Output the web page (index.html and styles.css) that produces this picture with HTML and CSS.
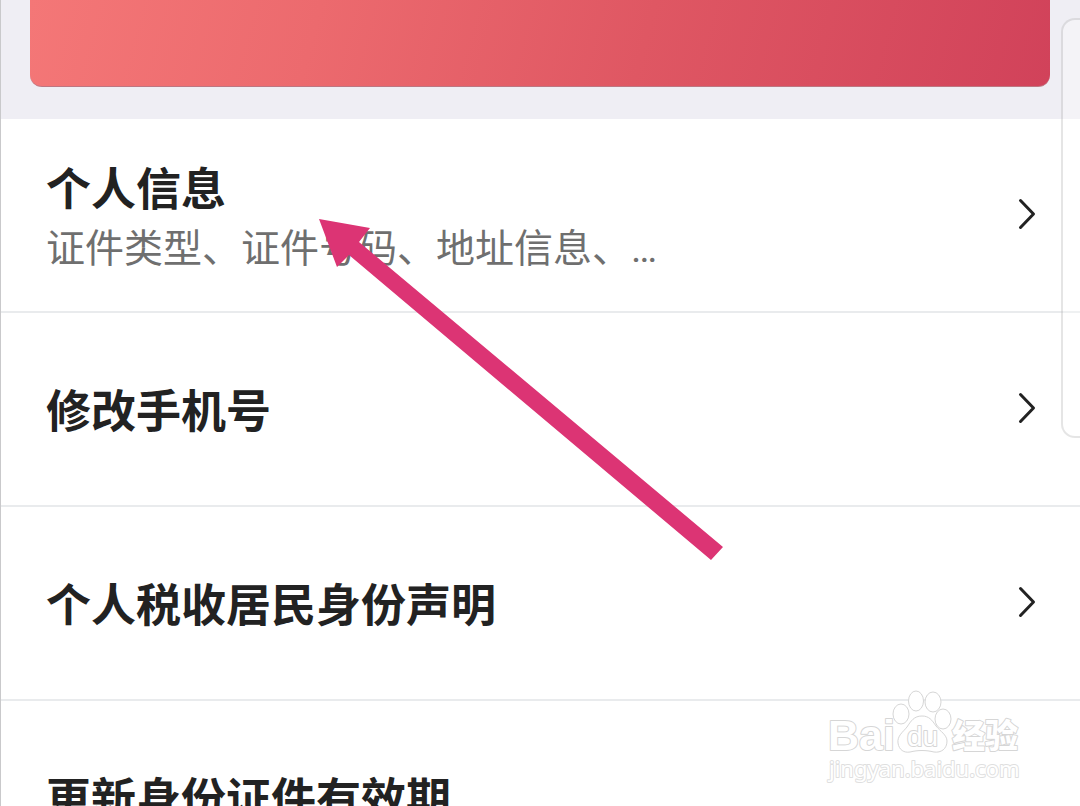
FILE: index.html
```html
<!DOCTYPE html>
<html lang="zh-CN">
<head>
<meta charset="utf-8">
<meta name="viewport" content="width=device-width, initial-scale=1">
<title>个人信息</title>
<link rel="stylesheet" href="styles.css">
</head>
<body>
<main class="screen">
  <header class="hero"><div class="card"></div></header>
  <nav class="list">
    <a class="row" href="#info">
      <span class="text"><span class="title">个人信息</span><span class="sub">证件类型、证件号码、地址信息、…</span></span>
      <svg class="chevron" viewBox="0 0 18 32" aria-hidden="true"><path d="M2.5 2.5 15.500 16 2.500 29.500"/></svg>
    </a>
    <a class="row" href="#phone">
      <span class="text"><span class="title">修改手机号</span></span>
      <svg class="chevron" viewBox="0 0 18 32" aria-hidden="true"><path d="M2.5 2.5 15.500 16 2.500 29.500"/></svg>
    </a>
    <a class="row" href="#tax">
      <span class="text"><span class="title">个人税收居民身份声明</span></span>
      <svg class="chevron" viewBox="0 0 18 32" aria-hidden="true"><path d="M2.5 2.5 15.500 16 2.500 29.500"/></svg>
    </a>
    <a class="row" href="#validity">
      <span class="text"><span class="title">更新身份证件有效期</span></span>
    </a>
  </nav>
  <div class="side-panel"></div>
  <svg class="arrow" viewBox="0 0 404 341" aria-hidden="true"><path d="M0 0 51 9 40 23 404 328 392 341 30 36 18 48Z"/></svg>
  <svg class="watermark" viewBox="0 0 200 100" role="img" aria-label="Baidu 经验 jingyan.baidu.com">
    <text class="wm-brand" x="0" y="60">Bai</text>
    <g class="wm-paw">
      <ellipse cx="73" cy="24" rx="8" ry="10"/>
      <ellipse cx="88" cy="11" rx="7.500" ry="10"/>
      <ellipse cx="105" cy="12" rx="8" ry="10"/>
      <ellipse cx="115" cy="29" rx="8" ry="10"/>
      <path d="M94 26C86 26 83 31 79 37C75 42 69 46 70 53C71 60 76 63 82 62C90 60 98 60 106 62C113 63 119 59 119 51C119 45 112 41 108 36C104 30 101 26 94 26Z"/>
    </g>
    <text class="wm-du" x="79" y="56">du</text>
    <text class="wm-cn" x="124" y="58">经验</text>
    <text class="wm-url" x="1" y="87">jingyan.baidu.com</text>
  </svg>
</main>
</body>
</html>
```
FILE: styles.css
```css
* { box-sizing: border-box; }
body { margin: 0; background: #fff; font-family: Roboto, "Noto Sans CJK SC", sans-serif; }
.screen { position: relative; height: 100vh; overflow: hidden; border-left: 1px solid #c9c9cb; }
.hero { padding: 0 30px 32px 29px; background: #efeef4; }
.card {
  height: 87px;
  border-radius: 0 0 12px 12px;
  border-bottom: 1px solid #bd7681;
  background: linear-gradient(105deg, #f47777 0%, #ec6a6e 28%, #df5763 60%, #d1425a 100%);
}
.row {
  display: flex;
  align-items: center;
  justify-content: space-between;
  min-height: 194px;
  padding: 0 44px 2px 45px;
  border-bottom: 2px solid #e9ebed;
  color: #222;
  text-decoration: none;
}
.text { display: flex; flex-direction: column; min-width: 0; padding-top: 10px; }
.title { font-size: 45px; line-height: 60px; font-weight: 700; }
.sub { font-size: 39px; line-height: 56px; font-weight: 400; color: #6f6f6f; white-space: nowrap; }
.chevron { flex: none; width: 18px; height: 32px; }
.chevron path { fill: none; stroke: #222; stroke-width: 3; stroke-linecap: round; stroke-linejoin: round; }
.side-panel {
  position: absolute;
  top: 18px;
  right: -20px;
  width: 39px;
  height: 420px;
  border: 2px solid rgba(0, 0, 0, .1);
  border-radius: 14px;
  background: rgba(255, 255, 255, .3);
}
.arrow { position: absolute; left: 318px; top: 219px; width: 404px; height: 341px; overflow: visible; fill: #dc3474; }
.watermark { position: absolute; right: 52px; bottom: 16px; width: 200px; height: 100px; overflow: visible; fill: #fff; stroke: #d6d6d6; stroke-width: 2; }
.watermark text { paint-order: stroke; stroke-linejoin: round; }
.wm-paw { stroke-width: 1; }
.wm-brand { font: 700 43px "Liberation Sans", sans-serif; }
.wm-du { font: 400 28px "Liberation Sans", sans-serif; }
.wm-cn { font: 900 33px "Noto Sans CJK SC", sans-serif; }
.wm-url { font: 400 22px "Noto Sans", sans-serif; stroke: #dfdfdf; }
```
